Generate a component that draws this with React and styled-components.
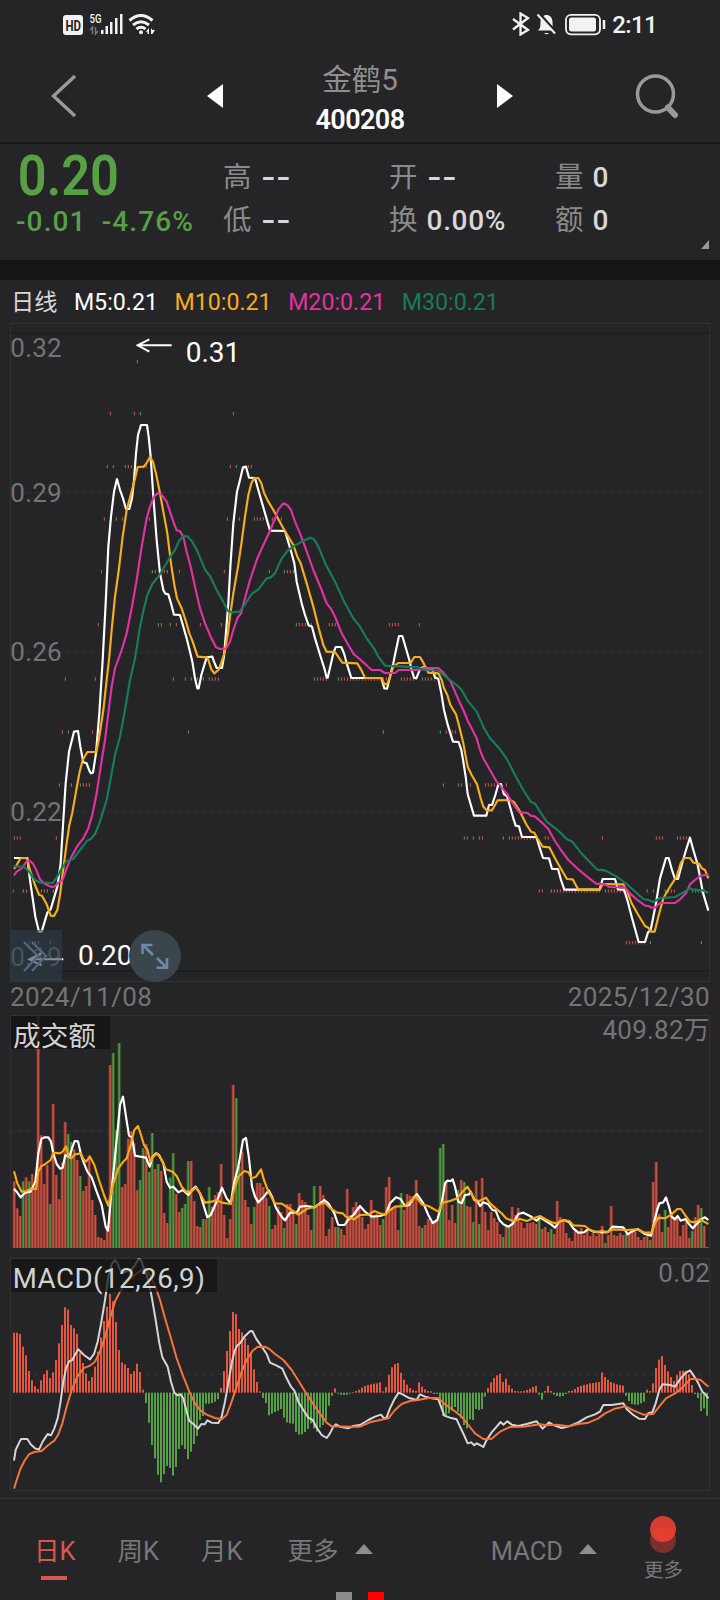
import styled, { createGlobalStyle } from "styled-components";

// Chart space: 3 units per css pixel, one trading day every 9 units.
const DAY = 9;
const RED = "#e2593f";
const GREEN = "#57a045";

const shift = (dx, dy, points) =>
  points
    .trim()
    .split(/\s+/)
    .map((p) => {
      const [x, y] = p.split(",").map(Number);
      return `${x + dx},${y + dy}`;
    })
    .join(" ");

const join = (...parts) => parts.join(" ");

const priceLines = [
  {
    color: "#ffffff",
    points: join(
      shift(0, 990, "42,624 82,624 90,690 106,800 117,845 125,845 142,788 152,778 172,710 182,640 190,510 197,400 207,305 222,245 234,243 241,290 250,337 260,340 268,362 273,370 279,368 288,310 298,190 308,30"),
      "317,850 325,680 333,590 342,515 351,477 360,510 369,535 378,567 388,567 396,535 402,480 408,400 414,345 423,315 441,315 446,350 452,410 460,530 470,660 480,760 490,810 496,821 505,823 513,850 522,884 540,885 550,920 560,955",
      shift(0, 990, "570,5 577,35 585,85 592,115 596,115 604,75 613,45 620,22 637,20 642,35 650,54 666,54 672,20"),
      "676,960 685,850 691,740 700,610 711,515 720,480 729,442 738,440 747,473 765,474 775,510 785,545 798,590 810,632 855,633 863,660 872,690 883,730 890,785 905,850 915,885 926,916 936,920 945,955 965,1020",
      shift(0, 990, "973,55 980,83 983,83 992,45"),
      "1000,1000 1007,981 1024,981 1032,1000 1040,1030",
      shift(1080, 990, "-26,84 64,84 73,115 81,116 90,80 100,40 106,10 117,-42 127,-42 148,30 155,60 162,83 169,85 181,55 190,52 217,57 225,82 235,87 244,130 252,180 262,220 271,250 279,275 296,276 304,300 310,335 317,380 323,432 334,470 342,497 379,497 387,465 396,465 406,435 415,403 423,402 432,433 441,438 450,470 460,505 467,527 477,529 486,561 529,561 538,590 549,624 567,625 576,657 594,657 603,690 613,719 719,719 728,687 765,687 774,718 792,719 802,750 815,800 836,876 855,876 864,847 872,840 880,800 887,765 900,685 918,624 926,624 936,660 945,687 954,687 965,645 978,600 990,563 1000,600 1012,640 1020,680 1028,725 1045,782")
    ),
  },
  {
    color: "#f8ae1c",
    points: join(
      shift(0, 990, "42,657 50,645 62,624 80,624 90,660 105,705 117,734 126,737 140,763 152,797 162,798 172,780 180,735 190,655 200,580 208,525 217,488 228,425 238,370 248,330 262,306 289,306 298,260 310,180 320,90 328,20"),
      "335,930 345,830 357,745 368,650 380,570 392,525 404,480 413,441 432,440 441,427 450,411 459,425 469,465 480,520 490,575 502,640 513,730 523,795 531,835 545,865 558,905 568,940 578,965 593,1010 620,1012",
      shift(0, 990, "625,30 634,58 643,70 655,60 664,38 673,10"),
      "683,945 690,890 700,820 714,740 725,665 735,590 745,525 754,490 763,474 775,474 784,490 792,518 805,545 820,570 850,625 880,675 892,710 902,730 920,790 940,860 955,920 970,975 980,995 1005,996",
      shift(1080, 990, "-53,38 -8,40 5,62 15,84 64,84 73,102 82,102 90,80 100,50 115,39 152,39 163,21 180,21 190,38 205,68 235,70 245,90 252,115 262,135 271,165 288,193 298,230 310,280 323,350 335,375 351,403 362,445 370,470 380,481 396,481 413,451 450,450 462,456 480,485 500,525 513,545 523,548 532,565 548,590 568,592 585,625 605,660 621,687 638,688 655,719 719,719 728,702 790,703 802,725 815,760 835,795 855,828 865,833 873,845 884,845 895,800 910,745 930,710 950,680 962,640 972,624 990,624 1000,638 1017,641 1026,655 1035,660 1045,685")
    ),
  },
  {
    color: "#e032a0",
    points: join(
      shift(0, 990, "42,676 50,665 65,655 80,634 88,632 98,640 108,658 120,688 135,702 155,711 165,709 175,698 188,690 200,655 212,625 232,588 250,565 265,535 278,490 290,430 302,350 315,270 325,190 335,110 345,55 356,25"),
      "365,990 380,940 395,865 410,780 425,680 440,595 450,560 462,530 473,520 484,523 500,545 510,575 520,605 530,631 540,634 550,650 560,695 572,740 585,800 600,865 615,910 632,950 648,982 660,987 678,986 690,965 700,930 713,893 723,880 735,835 750,780 772,715 790,675 810,633 825,595 835,568 850,550 862,555 873,570 885,605 900,640 915,680 940,750 965,810 980,850 992,865 1005,890 1025,940 1045,975 1062,1003 1080,1018",
      shift(1080, 990, "35,60 60,60 75,69 105,69 117,60 175,60 190,54 235,54 250,68 272,95 285,125 298,155 310,180 323,212 335,235 350,265 360,300 370,325 390,360 410,395 440,430 455,455 478,487 503,489 512,497 525,500 545,517 565,537 583,570 605,603 625,630 655,658 685,683 708,701 735,703 748,711 795,712 810,730 830,748 855,767 865,768 875,773 885,773 900,759 945,759 960,748 978,730 990,703 1005,690 1020,678 1045,673")
    ),
  },
  {
    color: "#177c59",
    points: join(
      shift(0, 990, "40,649 70,650 85,662 105,690 120,698 158,699 172,680 185,655 200,633 220,627 240,600 262,572 272,567 285,552 300,515 320,450 335,370 345,315 360,260 375,180 390,90 404,30"),
      "410,985 420,920 432,865 442,825 457,792 475,770 495,738 512,708 525,690 537,663 550,648 562,649 575,663 590,688 605,725 617,752 630,768 650,810 670,845 683,872 695,877 718,875 732,858 755,822 775,808 800,775 813,772 825,760 845,715 865,690 885,676 905,665 930,653 942,658 955,680 978,735 1005,785 1035,850 1060,895 1080,920 1100,955 1125,990",
      shift(1080, 990, "55,20 75,47 120,49 175,52 190,60 235,62 260,83 290,105 305,120 325,155 350,185 370,230 388,262 420,298 440,326 465,375 490,420 512,455 525,461 540,485 560,515 595,542 620,567 637,575 660,605 690,637 712,659 735,661 770,680 800,702 825,725 850,747 865,750 880,756 900,744 945,741 965,730 990,715 1000,719 1027,721 1045,728")
    ),
  },
];

const run = (from, to) => {
  const xs = [];
  for (let x = from; x <= to; x += DAY) xs.push(x);
  return xs;
};

// Closing price ticks, one row for every cent.
const ticks = [
  { y: 125, up: [412], down: [] },
  { y: 281, up: [331, 403, 700], down: [421] },
  { y: 440, up: [322, 376, 385, 394, 430, 439, 691, 745, 754], down: [340, 709] },
  { y: 597, up: [313, 367, 682, 772, 781, 790, 817, 826, 844], down: [349, 448, 718, 763] },
  { y: 755, up: [304, 466, 493, 502, 538, 673, 862, 871, 880], down: [355, 457, 808, 853] },
  { y: 914, up: [295, 484, 529, 601, 664, ...run(898, 934), 988, 997, 1006, ...run(1168, 1195), 1258], down: [475, 511, 889] },
  { y: 1077, up: [196, 286, 574, 592, 637, 646, 655, ...run(952, 979), ...run(1024, 1159), ...run(1213, 1240), ...run(1276, 1303)], down: [520, 556, 610, 628, 943, 1015, 1204, 1267] },
  { y: 1236, up: [187, 277, 1339, 1357, 1366], down: [205, 565, 1150, 1321] },
  { y: 1395, up: [178, 250, 259, 268, 1384, 1411, ...run(1456, 1483), 1519], down: [214, 241, 1330, 1375] },
  { y: 1554, up: [43, 52, 61, 169, 1402, 1447, ...run(1537, 1609), 1636, 1645, 1807, 1969, 1978, 1987, ...run(2032, 2068)], down: [1393, 1420, 1438, 1510, 1528] },
  { y: 1713, up: [40, 79, 124, 133, 142, 160, 1627, ...run(1663, 1798), ...run(1816, 1870), 1942, 1960, 2005, 2014, 2023], down: [70, 1618, 1654, 1996, ...run(2077, 2113)] },
  { y: 1868, up: [97, 106, 115, ...run(1879, 1933)], down: [88, 151, 1951, 2104] },
];

// Bar tops; a negative number marks a falling day.
const turnover = [
  514, 595, 618, -514, 502, -514, 492, 530, 18, 376, 522, 465, -582, 282, 495, 568, 458, 336, -372, -396,
  418, 450, -498, 543, 528, 436, 570, 615, 681, 684, 690, 650, 165, -129, -360, -99, 531, 522, 386, 364,
  400, 541, -510, -415, 402, -486, -369, 477, -462, 483, 609, 639, -503, -429, 552, 606, -594, -582, -453, 453,
  573, 648, 651, -627, 627, -531, 590, 555, 546, 462, 615, 684, 627, 225, -264, -470, 425, 570, 591, 642,
  -591, 519, 519, 531, 564, -588, 657, 645, 590, 606, -654, 582, 582, 600, -642, 549, 570, 576, 615, 660,
  -528, 590, 528, 555, 678, 657, 621, 651, -651, 657, 675, 537, 615, 591, 576, 590, 621, 657, 642, 570,
  621, 612, 645, -627, 531, 501, 597, 588, 660, -549, 600, 552, 558, 558, 510, 648, -654, 645, 627, 636,
  636, 627, -414, -402, 512, 630, 585, 639, -540, 510, -516, 588, 591, -636, 513, -642, 504, 606, 660, 606,
  624, 636, 672, -681, 645, -651, 591, 615, 594, 636, 654, 639, 639, 636, 642, -627, 657, 651, 666, -657,
  672, 573, 621, 630, 669, 684, 693, 657, 669, 654, 675, 660, 678, 669, 678, 672, 648, -699, 675, 588,
  675, 678, 669, 675, -672, 666, 660, 666, 681, 690, 681, 678, -690, 516, 456, 612, 666, -600, 651, 606,
  621, 618, 678, 645, 630, 684, -663, 621, 585, -594, 648, 711,
];

const turnoverLines = [
  {
    color: "#ffffff",
    points: join(
      "42,536 50,545 62,562 75,548 92,545 106,515 115,430 124,387 133,382 145,382 153,395 160,430 170,462 180,476 188,473 196,435 208,442 216,415 224,393 234,394 242,430 250,455 262,485 275,502 290,545 305,585 317,650 324,662 333,560 345,440 353,360 360,285 369,260 378,320 387,377 396,382 405,437 420,440 438,443 449,470 458,440 468,430 477,435 490,460 500,515 510,533 520,530 535,547 548,540 565,555 576,540 587,530 600,550 612,590 622,622 632,615 650,575 666,533 680,565 692,580 702,520 715,470 729,390 738,384 747,445 756,530 765,560 775,577 790,562 806,541 817,562 828,594 845,620 855,631 870,608 890,608 900,590 920,588 943,592 960,580 973,570 985,580 1003,610 1015,645 1034,645 1045,628 1060,615 1080,588",
      shift(1080, 0, "15,605 35,620 60,618 78,612 90,580 108,562 122,567 135,588 148,585 160,565 171,552 190,580 205,615 218,639 232,630 245,580 255,520 262,512 273,513 278,508 285,530 295,575 305,580 315,555 327,553 332,545 343,570 352,573 360,588 370,577 385,583 397,600 407,602 418,630 430,643 445,650 458,642 475,612 490,608 510,618 530,632 540,622 560,635 573,643 585,653 598,635 612,630 628,637 640,655 655,668 672,667 685,657 700,665 728,667 745,665 757,650 790,652 803,673 815,665 833,657 855,672 873,677 882,640 890,605 898,580 910,577 918,562 927,590 935,620 945,628 953,618 962,632 977,627 985,640 998,655 1012,640 1025,627 1035,622 1045,630")
    ),
  },
  {
    color: "#f8a914",
    points: join(
      "42,484 52,520 65,545 80,543 92,536 108,537 115,485 124,468 133,464 152,450 160,428 180,430 188,425 198,409 206,440 214,445 225,433 243,430 250,447 258,455 270,440 283,465 297,510 312,555 325,587 340,520 355,475 370,455 380,445 392,405 403,360 414,348 423,375 432,405 442,418 451,455 460,440 472,430 485,450 498,478 518,485 530,498 545,530 558,545 573,545 588,533 600,550 615,578 635,575 650,570 665,578 692,582 702,540 715,500 733,483 745,487 755,505 768,500 783,478 792,510 805,545 825,580 845,581 870,597 895,614 920,597 943,590 960,583 975,578 990,594 1010,607 1028,610 1038,620 1062,628 1080,615",
      shift(1080, 0, "25,614 43,603 62,611 75,614 90,600 105,590 135,588 150,575 168,560 185,583 205,588 235,605 248,578 270,573 292,565 305,548 322,530 333,548 345,570 358,573 378,563 390,580 408,596 425,610 438,625 460,633 480,627 500,633 520,625 540,618 555,627 575,637 590,640 610,630 628,633 640,646 675,648 690,660 710,667 728,662 740,668 757,658 800,660 830,658 855,668 875,668 885,640 895,623 915,625 935,613 952,597 963,597 975,615 990,635 1005,637 1020,628 1045,642")
    ),
  },
];

const MACD_ZERO = 428;
const macd = [
  248, 248, 252, 290, 316, 363, 391, 409, 417, 391, 373, 361, 384, 367, 330, 280, 225, 172, 179, 225, 235, 252,
  308, 339, 370, 393, 381, 350, 305, 262, 213, 170, 132, 154, 216, 300, 337, 343, 354, 372, 364, 341, 366, 419,
  459, 518, 585, 625, 674, 697, 672, 648, 654, 677, 651, 597, 586, 597, 627, 605, 582, 558, 510, 498, 461, 461,
  459, 455, 448, 414, 363, 303, 243, 186, 192, 237, 247, 264, 285, 308, 358, 396, 424, 444, 459, 496, 491, 486,
  482, 477, 503, 517, 520, 521, 546, 554, 553, 546, 537, 520, 535, 545, 533, 525, 510, 467, 437, 415, 431, 434,
  435, 434, 431, 426, 423, 419, 413, 408, 405, 403, 401, 400, 397, 424, 411, 375, 352, 342, 339, 368, 389, 404,
  414, 420, 423, 397, 410, 418, 423, 424, 432, 432, 460, 498, 495, 490, 482, 471, 485, 505, 525, 535, 508, 510,
  477, 480, 477, 440, 414, 397, 384, 376, 371, 396, 386, 405, 416, 423, 424, 424, 423, 420, 416, 411, 408, 434,
  449, 423, 408, 423, 434, 438, 440, 438, 432, 423, 422, 417, 411, 408, 405, 403, 400, 399, 397, 396, 367, 381,
  389, 396, 400, 403, 405, 407, 437, 453, 462, 464, 464, 460, 455, 419, 423, 400, 354, 329, 318, 345, 364, 381,
  393, 375, 363, 362, 362, 373, 405, 432, 444, 483, 475, 497,
];

const macdLines = [
  {
    color: "#d6d6d6",
    points: join(
      "42,632 47,600 55,583 63,567 82,567 92,583 105,595 117,599 128,575 143,552 153,556 163,535 173,505 181,460 190,395 198,355 207,334 217,330 226,312 235,298 252,315 270,328 282,312 293,275 303,222 315,150 325,80 335,42 345,30 352,38 360,60 370,68 395,58 405,45 415,28 423,30 432,55 445,90 455,140 467,210 478,280 487,322 503,350 513,395 523,428 532,436 541,433 550,445 560,485 568,513 580,522 594,536 604,522 614,523 622,511 635,518 655,519 665,500 675,455 685,400 695,340 703,305 711,287 720,280 733,260 750,244 757,243 768,265 785,290 800,312 810,338 830,347 847,356 860,385 873,410 883,422 895,455 910,480 925,503 938,510 950,533 965,555 980,564 990,550 1000,530 1008,523 1020,530 1045,535 1060,528 1080,525",
      shift(1080, 0, "25,510 45,500 63,494 72,505 80,502 90,475 103,448 116,428 128,433 145,443 170,450 180,433 195,440 215,445 235,448 245,475 253,497 270,503 290,508 300,530 312,555 323,580 333,577 343,586 350,580 360,585 370,591 380,570 395,547 410,530 422,516 430,524 442,514 455,524 475,528 500,522 530,514 548,536 567,517 580,525 605,534 630,528 655,517 680,502 705,493 720,485 730,465 755,465 790,460 800,477 820,495 837,506 855,507 865,490 877,487 887,460 898,420 908,403 930,405 945,410 960,388 975,370 990,361 1003,380 1015,400 1027,425 1035,432 1045,445")
    ),
  },
  {
    color: "#f6743b",
    points: join(
      "42,716 50,690 62,655 75,630 88,612 103,606 125,603 145,585 163,572 175,553 187,520 200,470 215,420 232,380 250,355 270,347 285,335 300,305 315,260 330,205 345,155 360,125 380,97 405,75 425,60 440,62 452,80 467,112 480,150 495,205 510,255 530,325 550,380 570,430 585,460 600,480 620,494 645,504 665,508 680,495 695,455 710,410 725,365 740,330 757,303 772,291 795,290 808,297 825,312 850,330 875,360 900,400 925,440 955,485 980,518 995,529 1050,530 1080,530",
      shift(1080, 0, "30,517 60,510 85,505 105,480 125,462 150,453 175,450 205,444 235,444 255,463 280,480 305,500 325,525 345,550 370,567 395,566 420,545 450,531 490,530 540,523 560,526 590,524 625,529 655,522 685,518 715,505 735,490 765,476 797,469 820,481 850,494 880,492 900,467 918,445 945,430 965,415 990,388 1005,386 1022,390 1045,410")
    ),
  },
];

const quotes = [
  { label: "高" },
  { label: "开" },
  { label: "量", value: "0" },
  { label: "低" },
  { label: "换", value: "0.00%" },
  { label: "额", value: "0" },
];

const averages = [
  { text: "M5:0.21", color: "#ffffff" },
  { text: "M10:0.21", color: "#f8ae1c" },
  { text: "M20:0.21", color: "#e032a0" },
  { text: "M30:0.21", color: "#177c59" },
];

const Lines = ({ data, width = 6.5 }) =>
  data.map((line) => (
    <polyline
      key={line.color}
      points={line.points}
      fill="none"
      stroke={line.color}
      strokeWidth={width}
      strokeLinejoin="round"
    />
  ));

const Dashes = ({ y }) => (
  <line x1="32" x2="2128" y1={y} y2={y} stroke="#353537" strokeWidth="3" strokeDasharray="12 12" />
);

const PriceChart = () => (
  <Chart viewBox="0 0 2160 1989" $height={663}>
    <rect x="32" y="10" width="2097" height="1974" fill="none" stroke="#353537" strokeWidth="3" />
    <path d="M32 40H2128M32 1954H2128" stroke="#1b1b1c" strokeWidth="3" />
    {[518, 997, 1475].map((y) => (
      <Dashes key={y} y={y} />
    ))}
    <AxisText x="31" y="111">0.32</AxisText>
    <AxisText x="31" y="546">0.29</AxisText>
    <AxisText x="31" y="1024">0.26</AxisText>
    <AxisText x="31" y="1503">0.22</AxisText>
    <AxisText x="31" y="1937">0.19</AxisText>
    {ticks.map((row) => (
      <g key={row.y}>
        {row.up.map((x) => (
          <rect key={x} x={x - 1.5} y={row.y - 5} width="3" height="10" fill="#d05c48" />
        ))}
        {row.down.map((x) => (
          <rect key={x} x={x - 1.5} y={row.y - 5} width="3" height="10" fill={GREEN} />
        ))}
      </g>
    ))}
    <Lines data={priceLines} />
    <g fill="none" stroke="#fff" strokeWidth="6">
      <path d="M515 76H413M448 58L413 76L448 95" />
      <path d="M190 1918H88M124 1900L88 1918L124 1936" />
    </g>
    <MarkText x="557" y="126">0.31</MarkText>
    <MarkText x="234" y="1935">0.20</MarkText>
  </Chart>
);

const TurnoverChart = () => (
  <Chart viewBox="0 0 2160 720" $height={240}>
    <path d="M32 714V16H2129V714" fill="none" stroke="#353537" strokeWidth="3" />
    <Dashes y={364} />
    {turnover.map((v, i) => {
      const top = Math.abs(v);
      const x = 38 + i * DAY;
      return (
        <g key={i}>
          <rect x={x} y={top} width="9" height={714 - top} fill={v < 0 ? "#387029" : "#9e3a2d"} />
          <rect x={x + 3} y={top} width="3.5" height={714 - top} fill={v < 0 ? "#5b9a4c" : "#ca5a4b"} />
        </g>
      );
    })}
    <Lines data={turnoverLines} />
    <rect x="33" y="18" width="297" height="99" fill="#141414" fillOpacity="0.82" />
    <TitleText x="39" y="107">成交额</TitleText>
    <AxisText x="2130" y="88" textAnchor="end">409.82万</AxisText>
  </Chart>
);

const MacdChart = () => (
  <Chart viewBox="0 0 2160 744" $height={248}>
    <rect x="32" y="25" width="2097" height="696" fill="none" stroke="#353537" strokeWidth="3" />
    <Dashes y={373} />
    {macd.map((v, i) => (
      <rect
        key={i}
        x={39 + i * DAY}
        y={Math.min(v, MACD_ZERO)}
        width="6"
        height={Math.abs(v - MACD_ZERO)}
        fill={v < MACD_ZERO ? RED : GREEN}
      />
    ))}
    <Lines data={macdLines} width={6} />
    <rect x="33" y="27" width="618" height="99" fill="#141414" fillOpacity="0.75" />
    <TitleText x="38" y="114" letterSpacing="1.5">MACD(12,26,9)</TitleText>
    <AxisText x="2130" y="97" textAnchor="end">0.02</AxisText>
  </Chart>
);

const StatusIcons = () => (
  <svg width="96" height="24" viewBox="62 12 96 24" fill="#f2f2f2">
    <rect x="63" y="15" width="20" height="20" rx="3" />
    <StatusText x="65.500" y="30.500" fontSize="15" fill="#252527" fontWeight="700" textLength="15.500" lengthAdjust="spacingAndGlyphs">HD</StatusText>
    <StatusText x="89.500" y="23" fontSize="12.500" fontWeight="500" textLength="12" lengthAdjust="spacingAndGlyphs">5G</StatusText>
    <path d="M92.500 34V27l-2.500 3M95.500 27v7l2.500-3" fill="none" stroke="#77777a" strokeWidth="1.500" />
    <path d="M101 30h2.500v4H101zM105.500 26h2.500v8h-2.500zM110 22h2.500v12H110zM115 18h2.500v16H115zM120 14h2.500v20H120z" />
    <g fill="none" stroke="#f2f2f2" strokeWidth="3">
      <path d="M129.500 20.500Q141 10.500 152.500 20.500" />
      <path d="M133 25Q141 18.500 149 25" />
      <path d="M136.500 29Q141 25.500 145.500 29" />
    </g>
    <circle cx="141" cy="32.200" r="2" />
    <path d="M149 28v6h-1.500v-2.500l-2 .5zM151 28v6h1.500l2.500-4h-2.500z" />
  </svg>
);

const PowerIcons = () => (
  <svg width="96" height="24" viewBox="512 12 96 24" fill="none" stroke="#f2f2f2">
    <path d="M514 19l15 11-7.500 4.500v-21L529 18l-15 11.500" strokeWidth="2.300" />
    <path
      d="M539 30.500h17c-2-2-2.500-3-2.500-8.500 0-4.500-3-7-6-7s-6 2.500-6 7c0 5.500-.5 6.500-2.500 8.500zM545 33h5q-2.500 2.500-5 0z"
      fill="#f2f2f2"
      stroke="none"
    />
    <path d="M540.500 13.500l17 19" stroke="#252527" strokeWidth="2.500" />
    <path d="M538.500 14.500l17.500 19" strokeWidth="2" />
    <rect x="567" y="14.800" width="34" height="19.500" rx="5" strokeWidth="1.800" />
    <rect x="570" y="17.500" width="27" height="14" rx="2.500" fill="#f2f2f2" stroke="none" />
    <path d="M605 20v9" strokeWidth="2.500" />
  </svg>
);

export default function App() {
  return (
    <>
      <GlobalStyle />
      <Screen>
        <StatusBar>
          <StatusIcons />
          <StatusRight>
            <PowerIcons />
            <Clock>2:11</Clock>
          </StatusRight>
        </StatusBar>

        <Header>
          <svg width="26" height="44" fill="none" stroke="#999" strokeWidth="3.500">
            <path d="M24 2L2.500 22L24 42" />
          </svg>
          <Stock>
            <svg width="16" height="24" fill="#fff">
              <path d="M16 0v24L0 12z" />
            </svg>
            <StockTitle>
              <StockName>金鹤5</StockName>
              <StockCode>400208</StockCode>
            </StockTitle>
            <svg width="16" height="24" fill="#fff">
              <path d="M0 0v24l16-12z" />
            </svg>
          </Stock>
          <svg width="46" height="46" fill="none" stroke="#999">
            <circle cx="21.500" cy="21" r="18" strokeWidth="3.500" />
            <path d="M34 34.500L41 42" strokeWidth="6" strokeLinecap="round" />
          </svg>
        </Header>

        <Quote>
          <div>
            <Price>0.20</Price>
            <Change>
              <span>-0.01</span>
              <span>-4.76%</span>
            </Change>
          </div>
          <QuoteGrid>
            {quotes.map((q) => (
              <QuoteItem key={q.label}>
                {q.label}
                {q.value ? <Value>{q.value}</Value> : <EmptyValue>--</EmptyValue>}
              </QuoteItem>
            ))}
          </QuoteGrid>
          <Corner />
        </Quote>
        <Band />

        <Legend>
          <LegendItem $color="#d8d8d8">日线</LegendItem>
          {averages.map((a) => (
            <LegendItem key={a.text} $color={a.color}>
              {a.text}
            </LegendItem>
          ))}
        </Legend>

        <PricePanel>
          <PriceChart />
          <SideButton>
            <svg width="52" height="52" fill="none" stroke="#53677f" strokeWidth="2.200">
              <path d="M14 12l14 14-14 15M22 12l14 14-14 15" />
            </svg>
          </SideButton>
          <ExpandButton>
            <svg width="52" height="52" fill="none" stroke="#6f87ac" strokeWidth="2.600">
              <path d="M24 25L14 15M13.500 24V15h10M28 28l9.500 9.500M38 28v9.800H27.500" />
            </svg>
          </ExpandButton>
        </PricePanel>
        <Dates>
          <span>2024/11/08</span>
          <span>2025/12/30</span>
        </Dates>
        <TurnoverChart />
        <MacdChart />

        <TabBar>
          <Tab $active>日K</Tab>
          <Tab>周K</Tab>
          <Tab>月K</Tab>
          <MenuTab>
            更多
            <Caret />
          </MenuTab>
          <IndicatorTab>
            MACD
            <Caret />
          </IndicatorTab>
          <More>
            <svg width="26" height="38">
              <circle cx="13" cy="24" r="13" fill="#7b302c" />
              <circle cx="13" cy="13" r="13" fill="#d63d31" />
              <path d="M1.300 18.500a13 13 0 0 1 23.400 0a13 13 0 0 1-23.400 0z" fill="#e33e30" />
            </svg>
            更多
          </More>
          <Pager>
            <Dot $color="#8a8a8a" />
            <Dot $color="#ff0000" />
          </Pager>
        </TabBar>
      </Screen>
    </>
  );
}

const GlobalStyle = createGlobalStyle`
  body {
    margin: 0;
    background: #252527;
    font-family: Roboto, "Noto Sans CJK SC", sans-serif;
  }
  svg {
    display: block;
    flex: none;
  }
`;

const Screen = styled.main`
  width: 720px;
  height: 1600px;
  overflow: hidden;
  display: flex;
  flex-direction: column;
  background: #252527;
`;

const StatusBar = styled.div`
  height: 48px;
  flex: none;
  box-sizing: border-box;
  padding: 0 63px 0 62px;
  display: flex;
  align-items: center;
  justify-content: space-between;
`;

const StatusRight = styled.div`
  display: flex;
  align-items: center;
  gap: 5px;
`;

const StatusText = styled.text`
  font-family: Roboto, sans-serif;
`;

const Clock = styled.span`
  font-size: 24px;
  font-weight: 500;
  line-height: 24px;
  letter-spacing: -0.6px;
  color: #f2f2f2;
  padding-top: 2px;
`;

const Header = styled.header`
  height: 96px;
  flex: none;
  box-sizing: border-box;
  padding: 2px 40px 0 51px;
  border-bottom: 2px solid #19191a;
  display: flex;
  align-items: center;
  justify-content: space-between;
`;

const Stock = styled.div`
  width: 306px;
  margin-left: 9px;
  display: flex;
  align-items: center;
  justify-content: space-between;
`;

const StockTitle = styled.div`
  padding-top: 9px;
  display: flex;
  flex-direction: column;
  align-items: center;
`;

const StockName = styled.span`
  font-size: 29.5px;
  line-height: 40px;
  color: #8f8f8f;
`;

const StockCode = styled.span`
  font-size: 27px;
  font-weight: 600;
  line-height: 41px;
  letter-spacing: -0.6px;
  color: #fff;
`;

const Quote = styled.section`
  position: relative;
  height: 116px;
  flex: none;
  box-sizing: border-box;
  padding: 4px 0 0 16px;
  display: flex;
  gap: 29px;
`;

const Price = styled.div`
  font-size: 55px;
  font-weight: 600;
  line-height: 56px;
  padding-left: 2px;
  color: ${GREEN};
  transform: scaleX(0.92);
  transform-origin: left;
`;

const Change = styled.div`
  width: 178px;
  display: flex;
  justify-content: space-between;
  font-size: 28px;
  font-weight: 500;
  line-height: 35px;
  letter-spacing: 1.1px;
  color: ${GREEN};
`;

const QuoteGrid = styled.div`
  display: grid;
  grid-template-columns: 166px 166px 150px;
  grid-template-rows: 43px 43px;
  padding-top: 8px;
`;

const QuoteItem = styled.div`
  display: flex;
  align-items: center;
  gap: 9px;
  font-size: 28.5px;
  line-height: 43px;
  color: #8a8a8a;
`;

const Value = styled.span`
  font-size: 28px;
  font-weight: 500;
  letter-spacing: 0.7px;
  color: #d8d8d8;
`;

const EmptyValue = styled(Value)`
  font-weight: 700;
  letter-spacing: 0;
  transform: scaleX(1.35);
  transform-origin: left;
`;

const Corner = styled.i`
  position: absolute;
  right: 11px;
  bottom: 11px;
  border-left: 8px solid transparent;
  border-bottom: 9px solid #999;
`;

const Band = styled.div`
  height: 20px;
  flex: none;
  background: #151515;
`;

const Legend = styled.div`
  height: 40px;
  flex: none;
  padding-left: 11px;
  display: flex;
  align-items: center;
  gap: 16.5px;
`;

const LegendItem = styled.span`
  font-size: 23.2px;
  line-height: 40px;
  padding-top: 4px;
  color: ${(p) => p.$color};
`;

const PricePanel = styled.section`
  position: relative;
  flex: none;
`;

const Chart = styled.svg`
  width: 720px;
  height: ${(p) => p.$height}px;
`;

const AxisText = styled.text`
  font-size: 78px;
  letter-spacing: 0.7px;
  fill: #747474;
`;

const MarkText = styled.text`
  font-size: 84px;
  fill: #fff;
`;

const TitleText = styled.text`
  font-size: 83px;
  fill: #d2d2d2;
`;

const SideButton = styled.div`
  position: absolute;
  left: 10px;
  bottom: 1px;
  width: 52px;
  height: 52px;
  background: rgba(45, 62, 74, 0.6);
`;

const ExpandButton = styled(SideButton)`
  left: 128.5px;
  border-radius: 50%;
  background: #3b464c;
`;

const Dates = styled.div`
  height: 27px;
  flex: none;
  padding: 0 10px;
  display: flex;
  justify-content: space-between;
  font-size: 26px;
  line-height: 28px;
  letter-spacing: 0.4px;
  color: #747474;
`;

const TabBar = styled.nav`
  position: relative;
  height: 102px;
  flex: none;
  box-sizing: border-box;
  padding: 0 37px 0 34px;
  border-top: 1px solid #353537;
  display: flex;
  gap: 42px;
  font-size: 25.5px;
  color: #777;
`;

const Tab = styled.div`
  height: 81px;
  box-sizing: border-box;
  padding-top: 33px;
  line-height: 38px;
  display: flex;
  gap: 16px;
  color: ${(p) => (p.$active ? "#d8594a" : "inherit")};
  background: ${(p) =>
    p.$active ? "linear-gradient(#d8594a, #d8594a) 7px 77px / 26px 4px no-repeat" : "none"};
`;

const MenuTab = styled(Tab)`
  margin-left: 3px;
`;

const IndicatorTab = styled(Tab)`
  margin-left: auto;
`;

const Caret = styled.i`
  margin-top: 12px;
  width: 0;
  height: 0;
  border: 9px solid transparent;
  border-top: 0;
  border-bottom: 10px solid #8e8e8e;
`;

const More = styled.div`
  margin-left: 5px;
  padding-top: 17px;
  display: flex;
  flex-direction: column;
  align-items: center;
  font-size: 19.5px;
  line-height: 34px;
`;

const Pager = styled.div`
  position: absolute;
  left: 336px;
  bottom: 0;
  display: flex;
  gap: 16px;
`;

const Dot = styled.i`
  width: 16px;
  height: 8px;
  background: ${(p) => p.$color};
`;
